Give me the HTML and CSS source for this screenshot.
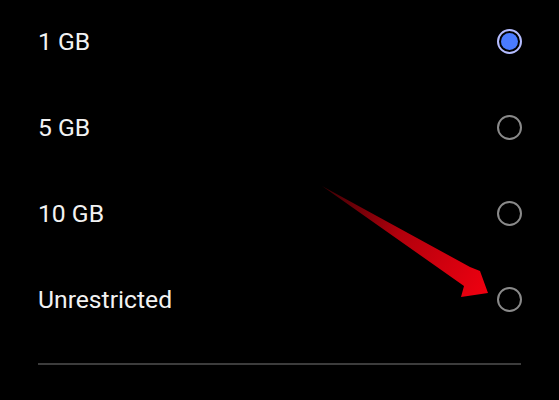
FILE: index.html
```html
<!DOCTYPE html>
<html lang="en">
<head>
    <meta charset="UTF-8">
    <meta name="viewport" content="width=device-width, initial-scale=1.0">
    <title>Data limit</title>
    <link rel="stylesheet" href="styles.css">
</head>
<body>
    <div class="screen">
        <ul class="options">
            <li class="option">
                <span class="label">1 GB</span>
                <span class="radio checked"></span>
            </li>
            <li class="option">
                <span class="label">5 GB</span>
                <span class="radio"></span>
            </li>
            <li class="option">
                <span class="label">10 GB</span>
                <span class="radio"></span>
            </li>
            <li class="option">
                <span class="label">Unrestricted</span>
                <span class="radio"></span>
            </li>
        </ul>
        <div class="divider"></div>
        <p class="note">Apps can use data without limits in the background</p>

        <!-- red pointer drawn over the list -->
        <svg class="pointer" width="559" height="400" viewBox="0 0 559 400">
            <defs>
                <linearGradient id="redFade" x1="322" y1="186" x2="488" y2="294" gradientUnits="userSpaceOnUse">
                    <stop offset="0" stop-color="#3a0004"/>
                    <stop offset="0.45" stop-color="#b0000c"/>
                    <stop offset="1" stop-color="#f00010"/>
                </linearGradient>
            </defs>
            <polygon points="322,186 470,267 480,271 488,293 461,297 464,286" fill="url(#redFade)"/>
        </svg>
    </div>
</body>
</html>
```

FILE: styles.css
```css
body {
    margin: 0;
    padding: 0;
    background: #000;
    font-family: Roboto, 'Noto Sans', sans-serif;
    color: #f2f2f2;
}
.screen {
    position: relative;
    height: 400px;
    overflow: hidden;
}
.options {
    list-style: none;
    margin: -2px 0 0 0;
    padding: 0 38px;
}
.option {
    display: flex;
    align-items: center;
    justify-content: space-between;
    height: 86px;
}
.label {
    font-size: 24.7px;
}
.radio {
    box-sizing: border-box;
    width: 25px;
    height: 25px;
    border: 2px solid #8a8a8a;
    border-radius: 50%;
    margin-right: -1px;
    display: flex;
    align-items: center;
    justify-content: center;
}
.radio.checked {
    border-color: #b4bcff;
}
.radio.checked::after {
    content: "";
    width: 17px;
    height: 17px;
    border-radius: 50%;
    background: #4a7bff;
}
.divider {
    height: 2px;
    margin: 21px 38px 0 38px;
    background: #3c3c3c;
}
.note {
    margin: 32px 38px 0 38px;
    font-size: 22px;
    color: #2a2a2a;
    white-space: nowrap;
}
.pointer {
    position: absolute;
    left: 0;
    top: 0;
}
```
